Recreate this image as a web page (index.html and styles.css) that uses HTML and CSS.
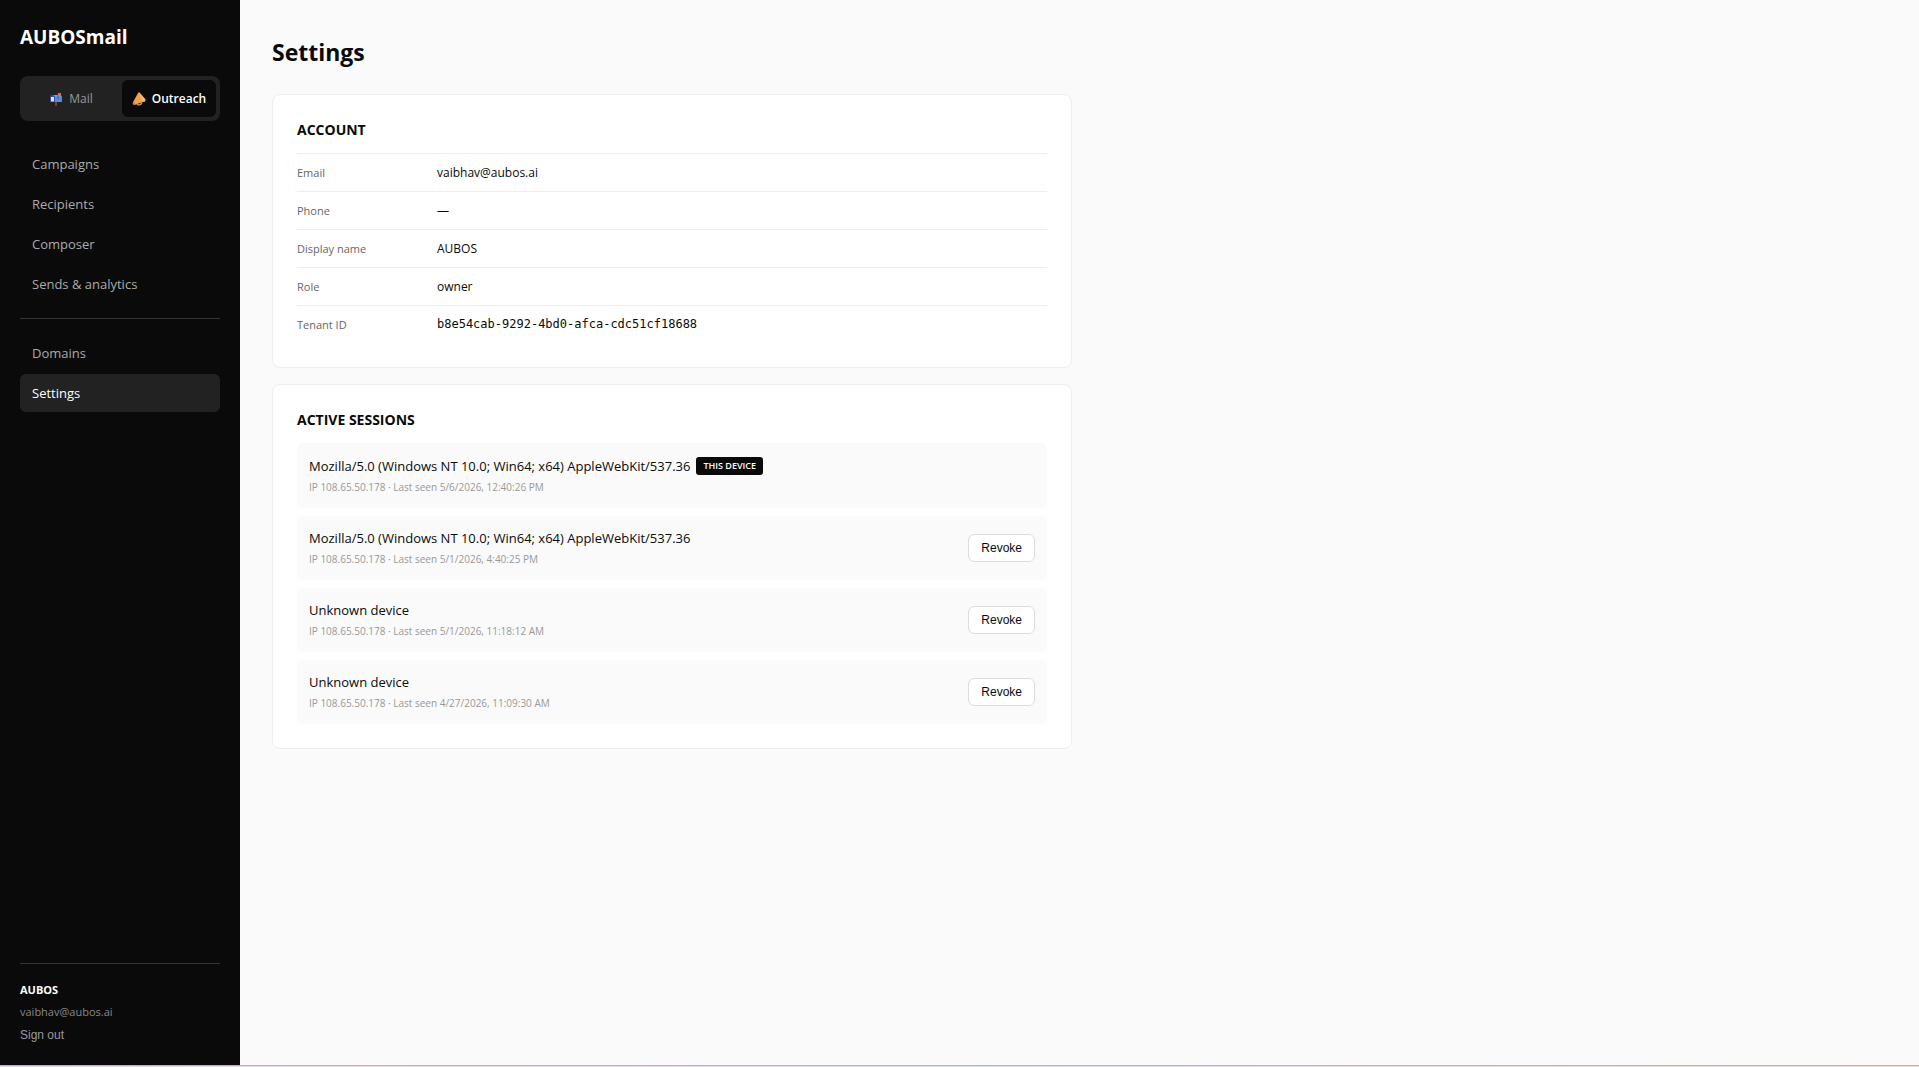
FILE: index.html
```html
<!DOCTYPE html>
<html lang="en">
<head>
<meta charset="utf-8">
<meta name="viewport" content="width=device-width, initial-scale=1">
<title>Settings · AUBOSmail</title>
<link rel="stylesheet" href="styles.css">
</head>
<body>
<div class="app">
  <aside class="sidebar">
    <div class="brand">AUBOSmail</div>
    <div class="mode-switch">
      <button type="button" class="mode">
        <svg class="mode-icon" viewBox="0 0 14 14" aria-hidden="true">
          <path d="M6 9h2v5H6z" fill="#6b4050"/>
          <path d="M4 3h6.500a2.500 2.500 0 0 1 2.500 2.500V10H4z" fill="#4a8fe0"/>
          <path d="M5 3h5.500a2.500 2.500 0 0 1 2.300 1.600H6z" fill="#69abf0"/>
          <path d="M1 5.500a2.500 2.500 0 0 1 5 0V10H1z" fill="#3b4a9c"/>
          <path d="M2 5h3v4.500H2z" fill="#e3e1f2"/>
          <path d="M8.500 1.500h1V7h-1z" fill="#a83a3a"/>
          <path d="M9 1h3v2.500H9z" fill="#d8694f"/>
        </svg>
        <span>Mail</span>
      </button>
      <button type="button" class="mode mode-active" aria-pressed="true">
        <svg class="mode-icon" viewBox="0 0 14 14" aria-hidden="true">
          <path d="M5 11.500c.5 2 4 2 5-1" fill="none" stroke="#d8964c" stroke-width="1.400"/>
          <path d="M6.300.5 1 10.200 3 12.800 13 9.300z" fill="#f0a14c"/>
          <path d="M6.300.5 7.500.5 13.600 7.500 13 9.500 11.500 9.800z" fill="#f6bd78"/>
          <path d="M1.800 9 .500 11.500 1.500 13l2-.5z" fill="#e07a50"/>
        </svg>
        <span>Outreach</span>
      </button>
    </div>
    <nav class="nav">
      <a class="nav-link" href="#campaigns">Campaigns</a>
      <a class="nav-link" href="#recipients">Recipients</a>
      <a class="nav-link" href="#composer">Composer</a>
      <a class="nav-link" href="#sends">Sends &amp; analytics</a>
      <hr class="nav-divider">
      <a class="nav-link" href="#domains">Domains</a>
      <a class="nav-link nav-link-active" href="#settings" aria-current="page">Settings</a>
    </nav>
    <div class="profile">
      <div class="profile-name">AUBOS</div>
      <div class="profile-email">vaibhav@aubos.ai</div>
      <button type="button" class="sign-out">Sign out</button>
    </div>
  </aside>

  <main class="main">
    <h1 class="page-title">Settings</h1>
    <section class="card">
      <h2 class="card-title">ACCOUNT</h2>
      <dl class="details">
        <div class="detail"><dt>Email</dt><dd>vaibhav@aubos.ai</dd></div>
        <div class="detail"><dt>Phone</dt><dd>—</dd></div>
        <div class="detail"><dt>Display name</dt><dd>AUBOS</dd></div>
        <div class="detail"><dt>Role</dt><dd>owner</dd></div>
        <div class="detail"><dt>Tenant ID</dt><dd class="mono">b8e54cab-9292-4bd0-afca-cdc51cf18688</dd></div>
      </dl>
    </section>
    <section class="card">
      <h2 class="card-title">ACTIVE SESSIONS</h2>
      <ul class="sessions">
        <li class="session">
          <div>
            <div class="session-name">Mozilla/5.0 (Windows NT 10.0; Win64; x64) AppleWebKit/537.36 <span class="badge">THIS DEVICE</span></div>
            <div class="session-meta">IP 108.65.50.178 · Last seen 5/6/2026, 12:40:26 PM</div>
          </div>
        </li>
        <li class="session">
          <div>
            <div class="session-name">Mozilla/5.0 (Windows NT 10.0; Win64; x64) AppleWebKit/537.36</div>
            <div class="session-meta">IP 108.65.50.178 · Last seen 5/1/2026, 4:40:25 PM</div>
          </div>
          <button type="button" class="revoke">Revoke</button>
        </li>
        <li class="session">
          <div>
            <div class="session-name">Unknown device</div>
            <div class="session-meta">IP 108.65.50.178 · Last seen 5/1/2026, 11:18:12 AM</div>
          </div>
          <button type="button" class="revoke">Revoke</button>
        </li>
        <li class="session">
          <div>
            <div class="session-name">Unknown device</div>
            <div class="session-meta">IP 108.65.50.178 · Last seen 4/27/2026, 11:09:30 AM</div>
          </div>
          <button type="button" class="revoke">Revoke</button>
        </li>
      </ul>
    </section>
  </main>
</div>
<div class="edge"></div>
</body>
</html>
```
FILE: styles.css
```css
* {
  box-sizing: border-box;
}

body {
  margin: 0;
  min-height: 100vh;
  display: flex;
  flex-direction: column;
  background: #fafafa;
  color: #0a0a0a;
  font-family: "Segoe UI", "Open Sans", sans-serif;
  font-size: 13px;
}

h1, h2, dl, dd, ul {
  margin: 0;
  padding: 0;
}

button {
  font-family: Arial, "Liberation Sans", sans-serif;
  font-size: 12px;
  cursor: pointer;
}

.app {
  flex: 1;
  display: flex;
}

/* Sidebar */
.sidebar {
  width: 240px;
  flex-shrink: 0;
  display: flex;
  flex-direction: column;
  padding: 20px;
  background: #0a0a0a;
  color: #fff;
}

.brand {
  margin-bottom: 22px;
  font-size: 19px;
  font-weight: 700;
  line-height: 34px;
}

.mode-switch {
  display: flex;
  gap: 4px;
  margin-bottom: 24px;
  padding: 4px;
  border-radius: 8px;
  background: #222;
}

.mode {
  flex: 1;
  display: flex;
  align-items: center;
  justify-content: center;
  gap: 6px;
  height: 37px;
  padding: 0;
  border: 0;
  border-radius: 6px;
  background: transparent;
  color: #999;
  font-family: inherit;
  font-weight: 500;
}

.mode-active {
  background: #0a0a0a;
  color: #fff;
  font-weight: 600;
}

.mode-icon {
  width: 14px;
  height: 14px;
}

.nav {
  display: flex;
  flex-direction: column;
  gap: 2px;
}

.nav-link {
  padding: 0 12px;
  border-radius: 6px;
  color: #aaa;
  line-height: 38px;
  text-decoration: none;
}

.nav-link-active {
  background: #222;
  color: #fff;
  font-weight: 500;
}

.nav-divider {
  width: 100%;
  margin: 13px 0;
  border: 0;
  border-top: 1px solid #333;
}

.profile {
  margin-top: auto;
  padding-top: 14px;
  border-top: 1px solid #333;
}

.profile-name {
  font-size: 11px;
  font-weight: 700;
  line-height: 23px;
}

.profile-email {
  margin-bottom: 3px;
  color: #888;
  font-size: 11px;
  line-height: 22px;
}

.sign-out {
  display: block;
  padding: 0;
  border: 0;
  background: none;
  color: #999;
  line-height: 19px;
}

/* Content */
.main {
  flex: 1;
  display: flex;
  flex-direction: column;
  gap: 16px;
  padding: 32px;
}

.page-title {
  margin-bottom: 6px;
  font-size: 23px;
  font-weight: 700;
  line-height: 40px;
}

.card {
  width: 100%;
  max-width: 800px;
  padding: 24px;
  border: 1px solid #eee;
  border-radius: 8px;
  background: #fff;
}

.card-title {
  margin-bottom: 12px;
  font-size: 14px;
  font-weight: 700;
  line-height: 22px;
}

.detail {
  display: grid;
  grid-template-columns: 140px 1fr;
  align-items: center;
  border-top: 1px solid #eee;
  line-height: 37px;
}

.detail dt {
  color: #666;
  font-size: 11px;
}

.detail dd {
  font-size: 12px;
}

.detail .mono {
  font-family: "DejaVu Sans Mono", monospace;
}

.sessions {
  display: flex;
  flex-direction: column;
  gap: 8px;
  list-style: none;
}

.session {
  display: flex;
  align-items: center;
  justify-content: space-between;
  padding: 12px;
  border-radius: 6px;
  background: #fafafa;
}

.session-name {
  display: flex;
  align-items: center;
  gap: 6px;
  margin-bottom: 2px;
  font-weight: 500;
  line-height: 21px;
}

.session-meta {
  color: #999;
  font-size: 10px;
  line-height: 17px;
}

.badge {
  margin: 2px 0;
  padding: 0 7px;
  border-radius: 3px;
  background: #0a0a0a;
  color: #fff;
  font-size: 9px;
  font-weight: 600;
  line-height: 18px;
}

.revoke {
  height: 28px;
  padding: 0 12px;
  border: 1px solid #ddd;
  border-radius: 6px;
  background: #fff;
  color: #0a0a0a;
}

/* Tinted strip along the bottom of the window */
.edge {
  height: 2px;
  border-top: 1px solid #b9b2b6;
  background: linear-gradient(90deg, #e0d8f0, #f0dce0 20%, #dcdcf0 50%, #e8e0e4 70%, #f0dcd4);
}
```
